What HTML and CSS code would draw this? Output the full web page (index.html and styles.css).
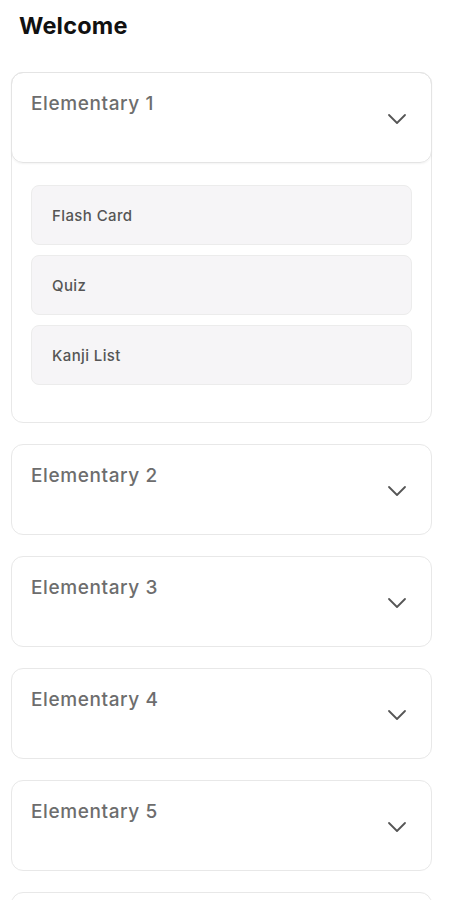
FILE: index.html
```html
<!doctype html>
<html lang="en">
<head>
	<meta charset="UTF-8">
	<title>Welcome</title>
	<link rel="stylesheet" href="styles.css">
</head>
<body>
	<div class="page">
		<h1 class="title">Welcome</h1>

		<div class="level open">
			<div class="level_head">
				<span class="level_name">Elementary 1</span>
				<svg class="arrow" width="20" height="12" viewBox="0 0 20 12"><path d="M2 2 L10 10 L18 2" fill="none" stroke="#555" stroke-width="1.8" stroke-linecap="round" stroke-linejoin="round"/></svg>
			</div>
			<div class="level_body">
				<a href="javascript:;" class="item">Flash Card</a>
				<a href="javascript:;" class="item">Quiz</a>
				<a href="javascript:;" class="item">Kanji List</a>
			</div>
		</div>

		<div class="level">
			<div class="level_head">
				<span class="level_name">Elementary 2</span>
				<svg class="arrow" width="20" height="12" viewBox="0 0 20 12"><path d="M2 2 L10 10 L18 2" fill="none" stroke="#555" stroke-width="1.8" stroke-linecap="round" stroke-linejoin="round"/></svg>
			</div>
		</div>

		<div class="level">
			<div class="level_head">
				<span class="level_name">Elementary 3</span>
				<svg class="arrow" width="20" height="12" viewBox="0 0 20 12"><path d="M2 2 L10 10 L18 2" fill="none" stroke="#555" stroke-width="1.8" stroke-linecap="round" stroke-linejoin="round"/></svg>
			</div>
		</div>

		<div class="level">
			<div class="level_head">
				<span class="level_name">Elementary 4</span>
				<svg class="arrow" width="20" height="12" viewBox="0 0 20 12"><path d="M2 2 L10 10 L18 2" fill="none" stroke="#555" stroke-width="1.8" stroke-linecap="round" stroke-linejoin="round"/></svg>
			</div>
		</div>

		<div class="level">
			<div class="level_head">
				<span class="level_name">Elementary 5</span>
				<svg class="arrow" width="20" height="12" viewBox="0 0 20 12"><path d="M2 2 L10 10 L18 2" fill="none" stroke="#555" stroke-width="1.8" stroke-linecap="round" stroke-linejoin="round"/></svg>
			</div>
		</div>

		<div class="level">
			<div class="level_head">
				<span class="level_name">Elementary 6</span>
				<svg class="arrow" width="20" height="12" viewBox="0 0 20 12"><path d="M2 2 L10 10 L18 2" fill="none" stroke="#555" stroke-width="1.8" stroke-linecap="round" stroke-linejoin="round"/></svg>
			</div>
		</div>
	</div>
</body>
</html>
```

FILE: styles.css
```css
body{
	margin: 0;
	background-color: #fff;
	font-family: Inter, 'Noto Sans', sans-serif;
}
.page{
	padding: 10px 20px 0 11px;
	display: flex;
	flex-direction: column;
	gap: 21px;
}
.title{
	margin: 0 0 9px 8px;
	font-size: 23.5px;
	font-weight: 700;
	line-height: 32px;
	letter-spacing: 0.2px;
	color: #111;
}
.level{
	border: 1px solid #e8e8e8;
	border-radius: 12px;
	background-color: #fff;
}
.level_head{
	height: 89px;
	padding: 0 24px 0 19px;
	display: flex;
	align-items: center;
	justify-content: space-between;
	border-radius: 12px;
}
.level_name{
	align-self: flex-start;
	margin-top: 18px;
	font-size: 19px;
	font-weight: 500;
	letter-spacing: 0.6px;
	color: #6d6d6d;
	line-height: 26px;
}
.arrow{
	margin-top: 2px;
}
.open .level_head{
	margin: -1px -1px 0;
	border: 1px solid #e4e4e4;
	box-shadow: 0 1px 2px rgba(0,0,0,0.05);
}
.level_body{
	padding: 22px 19px 37px;
	display: flex;
	flex-direction: column;
	gap: 10px;
}
.item{
	height: 58px;
	padding-left: 20px;
	display: flex;
	align-items: center;
	border: 1px solid #ececec;
	border-radius: 8px;
	background-color: #f6f5f7;
	font-size: 15px;
	font-weight: 500;
	letter-spacing: 0.4px;
	color: #555;
	text-decoration: none;
}
```
